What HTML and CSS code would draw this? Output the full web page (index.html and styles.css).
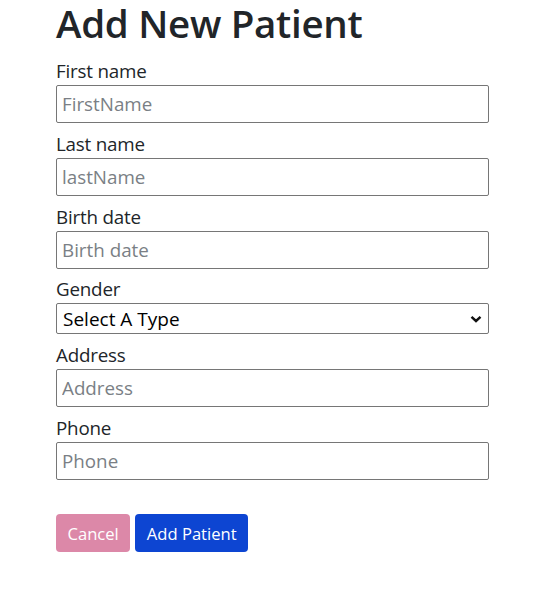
FILE: index.html
```html
<!DOCTYPE html>
<html>
<head>
<meta charset="utf-8">
<link rel="stylesheet" href="styles.css">
</head>
<body>
<div class="page">
  <h1 class="title">Add New Patient</h1>
  <form class="form">
    <div class="group">
      <label class="label">First name</label>
      <input class="field" type="text" placeholder="FirstName">
    </div>
    <div class="group">
      <label class="label">Last name</label>
      <input class="field" type="text" placeholder="lastName">
    </div>
    <div class="group">
      <label class="label">Birth date</label>
      <input class="field" type="text" placeholder="Birth date">
    </div>
    <div class="group">
      <label class="label">Gender</label>
      <div class="select">
        <span class="select-text">Select A Type</span>
        <svg class="chevron" width="12" height="8" viewBox="0 0 12 8"><path d="M1.5 1.8 L6 6 L10.5 1.8" fill="none" stroke="#111" stroke-width="2.4"/></svg>
      </div>
    </div>
    <div class="group">
      <label class="label">Address</label>
      <input class="field" type="text" placeholder="Address">
    </div>
    <div class="group">
      <label class="label">Phone</label>
      <input class="field" type="text" placeholder="Phone">
    </div>
    <div class="actions">
      <button type="button" class="btn btn-cancel">Cancel</button>
      <button type="button" class="btn btn-add">Add Patient</button>
    </div>
  </form>
</div>
</body>
</html>
```
FILE: styles.css
```css
* { box-sizing: border-box; }
html, body { margin: 0; padding: 0; background: #fff; }
body {
  font-family: "Open Sans", "Noto Sans", sans-serif;
  color: #212529;
}
.page {
  width: 433px;
  margin-left: 56px;
}
.title {
  margin: 0 0 13px 0;
  font-size: 38.5px;
  font-weight: 600;
  line-height: 46px;
  letter-spacing: -0.3px;
  white-space: nowrap;
}
.form {
  display: flex;
  flex-direction: column;
  gap: 8.8px;
}
.group {
  display: flex;
  flex-direction: column;
}
.label {
  display: block;
  height: 24px;
  line-height: 24px;
  font-size: 18.8px;
  margin-bottom: 2px;
  letter-spacing: -0.2px;
}
.field {
  display: block;
  width: 100%;
  height: 38px;
  margin: 0;
  border: 1px solid #767676;
  border-radius: 2px;
  padding: 0 5px;
  font-family: inherit;
  font-size: 18.8px;
  color: #212529;
  outline: none;
}
.field::placeholder { color: #7a7f85; }
.select {
  height: 31px;
  border: 1px solid #767676;
  border-radius: 2px;
  display: flex;
  align-items: center;
  justify-content: space-between;
  padding: 0 6px 0 6px;
  font-size: 19px;
  color: #000;
}
.chevron { display: block; }
.actions {
  display: flex;
  gap: 5px;
  margin-top: 25.5px;
}
.btn {
  height: 38px;
  border: none;
  border-radius: 4px;
  padding: 0 11.5px;
  font-family: inherit;
  font-size: 16.6px;
  color: #fff;
}
.btn-cancel { background: #dc88a8; }
.btn-add { background: #0d45d2; }
```
